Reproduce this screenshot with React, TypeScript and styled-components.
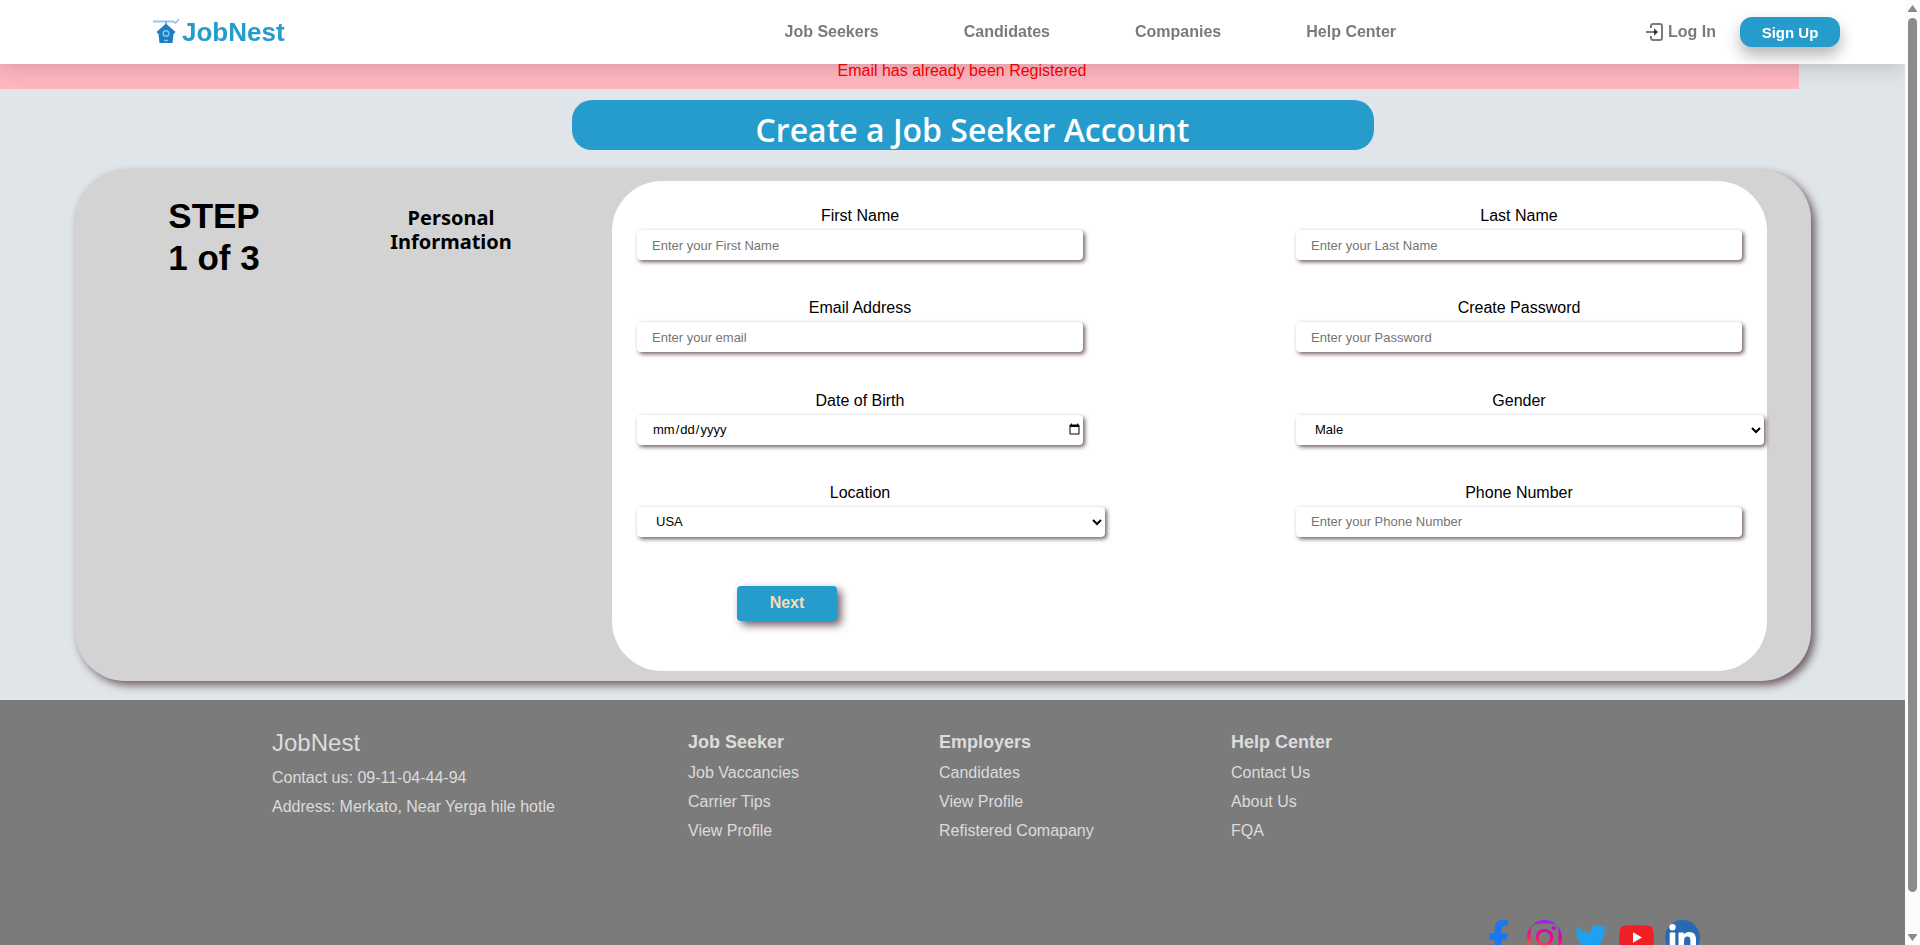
import React from 'react';
import styled, { createGlobalStyle } from 'styled-components';
import { FaFacebookF, FaTwitter } from 'react-icons/fa';

const blue = '#269ccd';
const arial = '"Liberation Sans", Arial, sans-serif';
const dusk = '#6f5c62';

const GlobalStyle = createGlobalStyle`
  * { box-sizing: border-box; }
  body { margin: 0; font-family: ${arial}; font-size: 16px; line-height: 18px; color: #000; }
  h1, h2, h3, p, ul { margin: 0; padding: 0; }
  ul { list-style: none; }
  a { color: inherit; text-decoration: none; }
`;

const Shell = styled.div`
  display: flex;
  height: 100vh;
`;

const Page = styled.div`
  flex: 1;
  min-width: 0;
  overflow-x: hidden;
  overflow-y: auto;
  scrollbar-width: none;
  background: #dfe5e9;
`;

const ScrollRail = styled.div`
  display: flex;
  flex-direction: column;
  align-items: center;
  width: 15px;
  padding: 5px 0 4px;
  background: #fcfcfc;
  svg { display: block; }
`;

const ScrollThumb = styled.div`
  width: 9px;
  flex: 1;
  margin: 6px 0 42px;
  border-radius: 5px;
  background: #8b8b8b;
`;

const Header = styled.header`
  position: sticky;
  top: 0;
  z-index: 2;
  display: grid;
  grid-template-columns: auto 2fr auto 1fr auto;
  align-items: center;
  height: 64px;
  padding: 0 65px 0 152px;
  background: #fff;
  box-shadow: 0 5px 20px rgba(0, 0, 0, 0.14);
`;

const Brand = styled.a`
  display: flex;
  align-items: center;
  gap: 2px;
  color: ${blue};
  font-size: 26px;
  line-height: 30px;
  font-weight: bold;
`;

const Nav = styled.nav`
  grid-column: 3;
  display: flex;
  gap: 85px;
`;

const NavLink = styled.a`
  display: flex;
  align-items: center;
  gap: 4px;
  color: #7a7a7a;
  font-weight: bold;
`;

const Account = styled.div`
  grid-column: 5;
  display: flex;
  align-items: center;
  gap: 24px;
`;

const SignUp = styled.button`
  width: 100px;
  height: 30px;
  padding: 0;
  border: 0;
  border-radius: 12px;
  background: ${blue};
  color: #fff;
  font: bold 15px ${arial};
  box-shadow: 0 8px 16px rgba(0, 0, 0, 0.3);
`;

const Alert = styled.p`
  margin: -13px 106px 0 0;
  padding: 11px 0 9px 125px;
  background: #ffb6c1;
  color: #f00;
  text-align: center;
`;

const Title = styled.h1`
  width: 802px;
  max-width: 90%;
  height: 50px;
  margin: 11px auto 20px 30%;
  padding-top: 11px;
  border-radius: 20px;
  background: ${blue};
  color: #fff;
  font: 600 32px/38px "Open Sans", sans-serif;
  text-align: center;
`;

const Card = styled.main`
  display: grid;
  grid-template-columns: 278px 196px 1fr;
  margin: 0 94px 19px 75px;
  padding: 11px 44px 10px 0;
  border-radius: 50px;
  background: #d3d3d3;
  box-shadow: 4px 4px 8px ${dusk};
`;

const Step = styled.h2`
  padding-top: 14px;
  font-size: 35px;
  line-height: 42px;
  text-align: center;
`;

const StepName = styled.h3`
  padding-top: 25px;
  font: bold 20px/24px "Noto Sans", sans-serif;
  text-align: center;
`;

const Form = styled.form`
  margin-left: 63px;
  padding: 26px 25px 50px;
  border-radius: 50px;
  background: #fff;
`;

const Fields = styled.div`
  display: grid;
  grid-template-columns: 1fr 1fr;
  column-gap: 213px;
  align-content: space-between;
  min-height: 330px;
`;

const FieldBox = styled.div`
  display: flex;
  flex-direction: column;
  gap: 5px;
`;

const Label = styled.label`
  text-align: center;
`;

const Input = styled.input`
  width: 100%;
  height: 30px;
  padding: 0 0 0 15px;
  border: 0;
  border-radius: 4px;
  background: #fff;
  color: #000;
  font: 13px ${arial};
  box-shadow: 2px 2px 4px ${dusk};
  &::placeholder { color: #757575; }
`;

const Select = styled.select`
  width: calc(100% + 22px);
  height: 30px;
  padding: 0 0 0 15px;
  border: 0;
  border-radius: 4px;
  background: #fff;
  color: #000;
  font: 13px ${arial};
  box-shadow: 2px 2px 4px ${dusk};
`;

const Next = styled.button`
  display: block;
  width: 100px;
  height: 35px;
  margin: 49px 0 0 100px;
  padding: 0 0 2px;
  border: 0;
  border-radius: 4px;
  background: ${blue};
  color: #f5deb3;
  font: bold 16px ${arial};
  box-shadow: 4px 4px 8px ${dusk};
`;

const Footer = styled.footer`
  padding: 32px 205px 60px 272px;
  background: #7b7b7b;
  color: #dcdcdc;
`;

const FooterColumns = styled.div`
  display: grid;
  grid-template-columns: 416px 251px 292px 1fr;
`;

const FooterBrand = styled.h2`
  margin-bottom: 15px;
  font-size: 24px;
  line-height: 22px;
  font-weight: normal;
`;

const FooterHeading = styled.h3`
  margin-bottom: 12px;
  font-size: 18px;
  line-height: 20px;
`;

const FooterList = styled.ul`
  display: flex;
  flex-direction: column;
  gap: 11px;
`;

const Socials = styled.div`
  display: flex;
  justify-content: flex-end;
  gap: 11px;
  margin-top: 80px;
`;

const Social = styled.a<{ $color?: string }>`
  display: flex;
  align-items: center;
  justify-content: center;
  width: 35px;
  height: 35px;
  color: ${(p) => p.$color};
`;

const BirdhouseLogo = () => (
  <svg width="28" height="28" viewBox="0 0 28 28" aria-hidden="true">
    <path d="M1 3.500h20l2.500 1.500 3.500-4" fill="none" stroke="#9cc8e2" strokeWidth="1.800" />
    <path d="M14 3v5" stroke="#6aa9d4" strokeWidth="1.600" />
    <path d="M14 5.500l9.500 8.500-2 2-1 9H7.500l-1-9-2-2z" fill="#1b7fc6" />
    <circle cx="14" cy="15.500" r="2.800" fill="#1b7fc6" stroke="#8cc4ea" strokeWidth="1.400" />
    <path d="M12 22.500h4" stroke="#8cc4ea" strokeWidth="1.400" />
  </svg>
);

const LoginIcon = () => (
  <svg width="18" height="18" viewBox="0 0 18 18" fill="none" stroke="#7c7c7c" strokeWidth="2" aria-hidden="true">
    <path d="M5 5V3q0-2 2-2h7q2 0 2 2v12q0 2-2 2H7q-2 0-2-2v-2" />
    <path d="M0 9h9" />
    <path d="M8 5.500L12 9l-4 3.500z" fill="#333" stroke="none" />
  </svg>
);

const InstagramLogo = () => (
  <svg width="35" height="35" viewBox="0 0 35 35" aria-hidden="true">
    <defs>
      <linearGradient id="ig" gradientUnits="userSpaceOnUse" x1="22" y1="0" x2="11" y2="35">
        <stop offset="0" stopColor="#8a2bf8" />
        <stop offset="0.350" stopColor="#e0069a" />
        <stop offset="0.550" stopColor="#f5127a" />
        <stop offset="0.800" stopColor="#ff5a20" />
        <stop offset="1" stopColor="#ffb000" />
      </linearGradient>
    </defs>
    <path
      fill="url(#ig)"
      fillRule="evenodd"
      d="M17.500 0a17.500 17.500 0 1 0 0 35a17.500 17.500 0 1 0 0-35zM11 3.500h13q7.500 0 7.500 7.500v13q0 7.500-7.500 7.500H11q-7.500 0-7.500-7.500V11q0-7.500 7.500-7.500z"
    />
    <circle cx="17.500" cy="17.500" r="7.300" fill="none" stroke="url(#ig)" strokeWidth="3" />
    <circle cx="26.800" cy="8.200" r="2.100" fill="#c40bd0" />
  </svg>
);

const YoutubeLogo = () => (
  <svg width="35" height="35" viewBox="0 0 35 35" aria-hidden="true">
    <path
      fill="#f01f26"
      d="M17.500 5.200c5 0 9 .1 12 .5 2.500.3 4 1.500 4.500 4 1.200 5 1.200 10.600 0 15.600-.5 2.500-2 3.700-4.500 4-6 .6-18 .6-24 0-2.500-.3-4-1.500-4.500-4-1.200-5-1.200-10.600 0-15.600.5-2.500 2-3.700 4.500-4 3-.4 7-.5 12-.5z"
    />
    <path fill="#fff" d="M14 12.300l9 5.200-9 5.200z" />
  </svg>
);

const LinkedinLogo = () => (
  <svg width="35" height="35" viewBox="0 0 35 35" aria-hidden="true">
    <circle cx="17.500" cy="17.500" r="17.500" fill="#2968b2" />
    <circle cx="7.500" cy="7.200" r="3.200" fill="#fff" />
    <path
      fill="#fff"
      d="M4.700 12.500h5.600V28H4.700zM13.500 12.500h5.300v2.200c1-1.600 2.800-2.700 5.300-2.700 4.700 0 6.900 2.700 6.900 7.500V28h-5.600v-7.500c0-2.500-.8-3.900-2.900-3.900-2.300 0-3.400 1.600-3.400 4V28h-5.600z"
    />
  </svg>
);

type FieldProps = { id: string; label: string; type?: string; placeholder?: string; options?: string[] };

const Field = ({ id, label, type = 'text', placeholder, options }: FieldProps) => (
  <FieldBox>
    <Label htmlFor={id}>{label}</Label>
    {options ? (
      <Select id={id}>
        {options.map((o) => (
          <option key={o}>{o}</option>
        ))}
      </Select>
    ) : (
      <Input id={id} type={type} placeholder={placeholder} />
    )}
  </FieldBox>
);

const fields: FieldProps[] = [
  { id: 'firstName', label: 'First Name', placeholder: 'Enter your First Name' },
  { id: 'lastName', label: 'Last Name', placeholder: 'Enter your Last Name' },
  { id: 'email', label: 'Email Address', type: 'email', placeholder: 'Enter your email' },
  { id: 'password', label: 'Create Password', type: 'password', placeholder: 'Enter your Password' },
  { id: 'birth', label: 'Date of Birth', type: 'date' },
  { id: 'gender', label: 'Gender', options: ['Male', 'Female'] },
  { id: 'location', label: 'Location', options: ['USA', 'Ethiopia'] },
  { id: 'phone', label: 'Phone Number', type: 'tel', placeholder: 'Enter your Phone Number' },
];

const footerColumns = [
  { title: 'Job Seeker', links: ['Job Vaccancies', 'Carrier Tips', 'View Profile'] },
  { title: 'Employers', links: ['Candidates', 'View Profile', 'Refistered Comapany'] },
  { title: 'Help Center', links: ['Contact Us', 'About Us', 'FQA'] },
];

export default function App() {
  return (
    <Shell>
      <GlobalStyle />
      <Page>
        <Header>
          <Brand href="#">
            <BirdhouseLogo />
            JobNest
          </Brand>
          <Nav>
            {['Job Seekers', 'Candidates', 'Companies', 'Help Center'].map((item) => (
              <NavLink href="#" key={item}>
                {item}
              </NavLink>
            ))}
          </Nav>
          <Account>
            <NavLink href="#">
              <LoginIcon />
              Log In
            </NavLink>
            <SignUp type="button">Sign Up</SignUp>
          </Account>
        </Header>

        <Alert role="alert">Email has already been Registered</Alert>
        <Title>Create a Job Seeker Account</Title>

        <Card>
          <Step>
            STEP
            <br />1 of 3
          </Step>
          <StepName>
            Personal
            <br />
            Information
          </StepName>
          <Form onSubmit={(e: React.FormEvent) => e.preventDefault()}>
            <Fields>
              {fields.map((f) => (
                <Field key={f.id} {...f} />
              ))}
            </Fields>
            <Next type="submit">Next</Next>
          </Form>
        </Card>

        <Footer>
          <FooterColumns>
            <div>
              <FooterBrand>JobNest</FooterBrand>
              <FooterList>
                <li>Contact us: 09-11-04-44-94</li>
                <li>Address: Merkato, Near Yerga hile hotle</li>
              </FooterList>
            </div>
            {footerColumns.map((column) => (
              <div key={column.title}>
                <FooterHeading>{column.title}</FooterHeading>
                <FooterList>
                  {column.links.map((link) => (
                    <li key={link}>
                      <a href="#">{link}</a>
                    </li>
                  ))}
                </FooterList>
              </div>
            ))}
          </FooterColumns>
          <Socials>
            <Social href="#" aria-label="Facebook" $color="#1877f2">
              <FaFacebookF size={35} />
            </Social>
            <Social href="#" aria-label="Instagram">
              <InstagramLogo />
            </Social>
            <Social href="#" aria-label="Twitter" $color="#1da1f2">
              <FaTwitter size={32} />
            </Social>
            <Social href="#" aria-label="YouTube">
              <YoutubeLogo />
            </Social>
            <Social href="#" aria-label="LinkedIn">
              <LinkedinLogo />
            </Social>
          </Socials>
        </Footer>
      </Page>
      <ScrollRail aria-hidden="true">
        <svg width="9" height="7" viewBox="0 0 9 7">
          <path d="M4.500 0L9 6v1H0V6z" fill="#8b8b8b" />
        </svg>
        <ScrollThumb />
        <svg width="9" height="7" viewBox="0 0 9 7">
          <path d="M0 0h9v1L4.500 7 0 1z" fill="#8b8b8b" />
        </svg>
      </ScrollRail>
    </Shell>
  );
}
